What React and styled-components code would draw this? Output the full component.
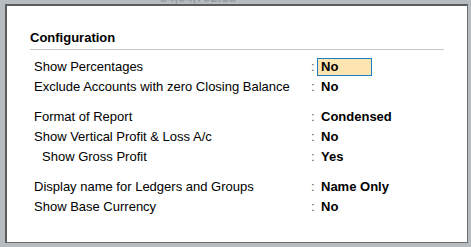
import styled, { createGlobalStyle } from "styled-components";

const GlobalStyle = createGlobalStyle`
  html, body {
    margin: 0;
    padding: 0;
    background: #b7bcc0;
    font-family: "Liberation Sans", Arial, sans-serif;
  }
`;

const groups = [
  [
    { label: "Show Percentages", value: "No", focused: true },
    { label: "Exclude Accounts with zero Closing Balance", value: "No" },
  ],
  [
    { label: "Format of Report", value: "Condensed" },
    { label: "Show Vertical Profit & Loss A/c", value: "No" },
    { label: "Show Gross Profit", value: "Yes", indent: true },
  ],
  [
    { label: "Display name for Ledgers and Groups", value: "Name Only" },
    { label: "Show Base Currency", value: "No" },
  ],
];

const App = () => {
  return (
    <Screen>
      <GlobalStyle />
      <Behind>
        <BehindText>34,64,792.58</BehindText>
      </Behind>
      <Panel>
        <Title>Configuration</Title>
        <Groups>
          {groups.map((rows, i) => (
            <Group key={i}>
              {rows.map((row) => (
                <Row key={row.label}>
                  <Label $indent={row.indent}>{row.label}</Label>
                  <Colon>:</Colon>
                  <Value $focused={row.focused}>{row.value}</Value>
                </Row>
              ))}
            </Group>
          ))}
        </Groups>
      </Panel>
    </Screen>
  );
};

const Screen = styled.div`
  width: 471px;
  height: 247px;
  overflow: hidden;
`;

const Behind = styled.div`
  height: 4px;
  overflow: hidden;
  padding-left: 160px;
`;

const BehindText = styled.div`
  margin-top: -10px;
  font-size: 13px;
  line-height: 16px;
  font-weight: bold;
  color: #9a9ea2;
`;

const Panel = styled.div`
  box-sizing: border-box;
  margin-left: 5px;
  width: 463px;
  height: 239px;
  background: #ffffff;
  border: 1px solid #6e6e6e;
  border-left: 2px solid #5c5c5c;
  border-top: 2px solid #5c5c5c;
  padding: 24px 0 0 23px;
`;

const Title = styled.div`
  width: 414px;
  font-size: 13px;
  line-height: 16px;
  font-weight: bold;
  color: #000;
  padding-bottom: 3px;
  border-bottom: 1px solid #c8c8c8;
`;

const Groups = styled.div`
  display: flex;
  flex-direction: column;
  gap: 10px;
  margin-top: 7px;
  padding-left: 4px;
`;

const Group = styled.div`
  display: flex;
  flex-direction: column;
`;

const Row = styled.div`
  display: grid;
  grid-template-columns: 277px 6px auto;
  align-items: center;
  height: 20px;
  font-size: 13px;
  line-height: 16px;
  color: #000;
`;

const Label = styled.div`
  padding-left: ${(p) => (p.$indent ? "8px" : "0")};
  white-space: nowrap;
`;

const Colon = styled.div`
  color: #555;
`;

const Value = styled.div`
  box-sizing: border-box;
  justify-self: start;
  height: 18px;
  min-width: 55px;
  padding: 0 3px;
  line-height: 16px;
  font-weight: bold;
  border: 1px solid ${(p) => (p.$focused ? "#1c7fc6" : "transparent")};
  background: ${(p) => (p.$focused ? "#fde5b1" : "transparent")};
`;

export default App;
